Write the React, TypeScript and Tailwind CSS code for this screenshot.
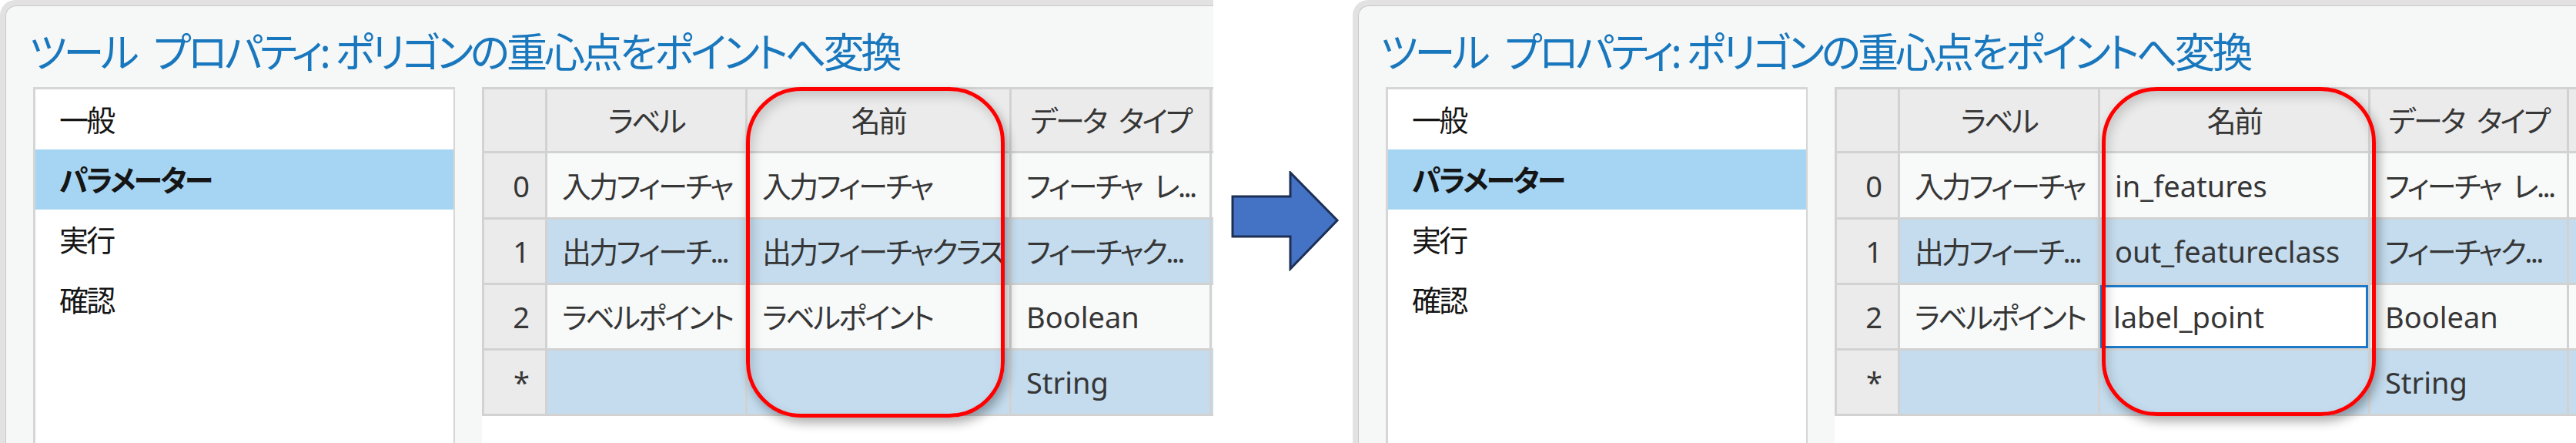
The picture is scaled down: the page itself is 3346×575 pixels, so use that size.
const font = "font-['Noto_Sans','Noto_Sans_CJK_JP',sans-serif] [font-feature-settings:'palt']";

type Cell = { text: string; edit?: boolean };
type Row = { bg: string; cells: Cell[] };

const menu = ["一般", "パラメーター", "実行", "確認"];

// Japanese glyphs in the reference are narrower than Noto CJK, so tighten them
const jp = (t: string) => (/[^\x00-\x7f]/.test(t) ? "tracking-[-0.07em]" : "");

function Menu() {
	return (
		<div className="w-[548px] shrink-0 bg-white border-l-[3px] border-t-[3px] border-r-[2px] border-[#d6d6d6] h-full">
			{menu.map((m, i) => (
				<div
					key={m}
					className={`h-[78px] flex items-center pl-[31px] text-[38px] leading-none tracking-[-0.07em] text-[#151515] ${
						i === 1 ? "bg-[#a6d5f3] font-bold" : ""
					}`}
				>
					{m}
				</div>
			))}
		</div>
	);
}

function Grid({ cols, rows, ring }: { cols: string; rows: Row[]; ring: string }) {
	return (
		<div className="relative flex-1 min-w-0 h-full bg-white">
			<div className={`grid ${cols} grid-rows-[83px_86px_85px_85px_85px] border-l-[3px] border-t-[3px] border-[#d2d2d2] text-[38px] leading-none text-[#363636]`}>
				{["", "ラベル", "名前", "データ\u2002タイプ", ""].map((h, i) => (
					<div key={"h" + i} className={`bg-[#ebebeb] border-r-[3px] border-b-[3px] border-[#d2d2d2] flex items-center justify-center whitespace-nowrap overflow-hidden ${jp(h)}`}>
						{h}
					</div>
				))}
				{rows.map((r, ri) =>
					r.cells.map((c, ci) => (
						<div
							key={ri + "-" + ci}
							className={`border-r-[3px] border-b-[3px] border-[#d2d2d2] flex items-center whitespace-nowrap overflow-hidden ${jp(c.text)} ${
								ci === 0 ? "bg-[#ebebeb] justify-end pr-[20px]" : r.bg + " pl-[19px]"
							} ${c.edit ? "!pl-0" : ""}`}
						>
							{c.edit ? (
								<div className="h-full w-full bg-white border-[3px] border-[#1c7acb] flex items-center pl-[14px]">{c.text}</div>
							) : (
								c.text
							)}
						</div>
					)),
				)}
			</div>
			<div className={`absolute top-0 ${ring} rounded-[72px] border-[5px] border-[#ff0000] shadow-[4px_7px_14px_rgba(0,0,0,0.32),inset_4px_7px_14px_rgba(0,0,0,0.16)]`} />
		</div>
	);
}

function Shot({
	w,
	titlePad,
	cols,
	rows,
	ring,
}: {
	w: string;
	titlePad: string;
	cols: string;
	rows: Row[];
	ring: string;
}) {
	return (
		<div className={`${w} h-[575px] shrink-0 overflow-hidden bg-white`}>
			<div className={`h-full flex flex-col bg-[#f6f7f7] border-t-[7px] border-l-[7px] border-[#e2e2e2] rounded-tl-[20px] shadow-[inset_1px_1px_0_#c9c9c9] ${font}`}>
				<div className={`h-[106px] shrink-0 flex items-center pt-[14px] ${titlePad} text-[53px] leading-none tracking-[-0.075em] text-[#1877bd] whitespace-nowrap`}>
					ツール{"\u2002"}プロパティ: ポリゴンの重心点をポイントへ変換
				</div>
				<div className="flex-1 flex pl-[36px] gap-[35px] min-h-0">
					<Menu />
					<Grid cols={cols} rows={rows} ring={ring} />
				</div>
			</div>
		</div>
	);
}

const white = "bg-[#f8f9f9]";
const blue = "bg-[#c4dcee]";

const rowsA: Row[] = [
	{ bg: white, cells: [{ text: "0" }, { text: "入力フィーチャ" }, { text: "入力フィーチャ" }, { text: "フィーチャ\u2002レ..." }, { text: "" }] },
	{ bg: blue, cells: [{ text: "1" }, { text: "出力フィーチ..." }, { text: "出力フィーチャクラス" }, { text: "フィーチャク..." }, { text: "" }] },
	{ bg: white, cells: [{ text: "2" }, { text: "ラベルポイント" }, { text: "ラベルポイント" }, { text: "Boolean" }, { text: "" }] },
	{ bg: blue, cells: [{ text: "*" }, { text: "" }, { text: "" }, { text: "String" }, { text: "" }] },
];

const rowsB: Row[] = [
	{ bg: white, cells: [{ text: "0" }, { text: "入力フィーチャ" }, { text: "in_features" }, { text: "フィーチャ\u2002レ..." }, { text: "" }] },
	{ bg: blue, cells: [{ text: "1" }, { text: "出力フィーチ..." }, { text: "out_featureclass" }, { text: "フィーチャク..." }, { text: "" }] },
	{ bg: white, cells: [{ text: "2" }, { text: "ラベルポイント" }, { text: "label_point", edit: true }, { text: "Boolean" }, { text: "" }] },
	{ bg: blue, cells: [{ text: "*" }, { text: "" }, { text: "" }, { text: "String" }, { text: "" }] },
];

export default function App() {
	return (
		<div className="flex w-[3346px] h-[575px] bg-white overflow-hidden">
			<Shot
				w="w-[1576px]"
				titlePad="pl-[31px]"
				cols="grid-cols-[82px_260px_343px_260px_1fr]"
				rows={rowsA}
				ring="left-[343px] w-[336px] h-[429px]"
			/>
			<div className="w-[181px] shrink-0 pl-[23px] pt-[222px]">
				<svg width="142" height="130" viewBox="0 0 142 130">
					<polygon
						points="2,33 77,33 77,2 138,64 77,127 77,85 2,85"
						fill="#4472c4"
						stroke="#1c2f55"
						strokeWidth="3"
						strokeLinejoin="miter"
					/>
				</svg>
			</div>
			<Shot
				w="w-[1589px]"
				titlePad="pl-[29px]"
				cols="grid-cols-[82px_260px_351px_258px_1fr]"
				rows={rowsB}
				ring="left-[347px] w-[356px] h-[427px]"
			/>
		</div>
	);
}
